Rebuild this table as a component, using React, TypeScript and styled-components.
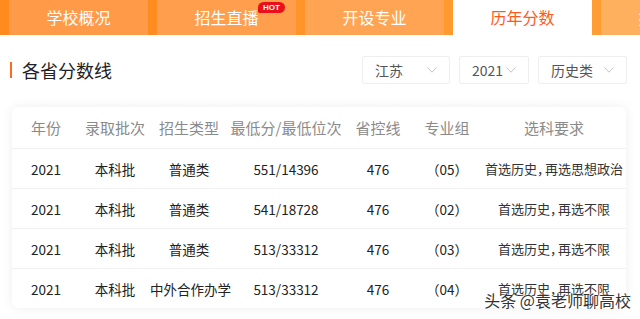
import React from 'react';
import styled, { createGlobalStyle } from 'styled-components';

const GlobalStyle = createGlobalStyle`
  html, body {
    margin: 0;
    padding: 0;
    background: #fff;
    font-family: "Noto Sans CJK SC", "Noto Sans", sans-serif;
  }
`;

const tabs = [
  { label: '学校概况', body: '#ff9a48', edge: '#ff8a1e' },
  { label: '招生直播', body: '#ff9e4c', edge: '#ff8c20', hot: true },
  { label: '开设专业', body: '#ffa452', edge: '#ff9428' },
  { label: '历年分数', body: '#ffffff', edge: '#ff9a2e', active: true },
  { label: '报考指南', body: '#ffb05e', edge: '#ff9c32' },
];

const columns = [
  { title: '年份', width: 68 },
  { title: '录取批次', width: 70 },
  { title: '招生类型', width: 78 },
  { title: '最低分/最低位次', width: 116 },
  { title: '省控线', width: 68 },
  { title: '专业组', width: 70 },
  { title: '选科要求', width: 144 },
];

const rows = [
  ['2021', '本科批', '普通类', '551/14396', '476', '（05）', ['首选历史', '再选思想政治']],
  ['2021', '本科批', '普通类', '541/18728', '476', '（02）', ['首选历史', '再选不限']],
  ['2021', '本科批', '普通类', '513/33312', '476', '（03）', ['首选历史', '再选不限']],
  ['2021', '本科批', '中外合作办学', '513/33312', '476', '（04）', ['首选历史', '再选不限']],
] as const;

const filters = [
  { value: '江苏', width: 88 },
  { value: '2021', width: 70 },
  { value: '历史类', width: 89 },
];

const Chevron = () => (
  <svg width="10" height="6" viewBox="0 0 10 6" fill="none">
    <path d="M0.5 0.5 L5 5.2 L9.5 0.5" stroke="#c4c4c4" strokeWidth="1" />
  </svg>
);

const App: React.FC = () => (
  <Page>
    <GlobalStyle />
    <TabBar>
      {tabs.map((t) => (
        <Tab key={t.label} edge={t.edge}>
          <TabBody body={t.body} active={!!t.active}>
            {t.label}
            {t.hot && <Hot>HOT</Hot>}
          </TabBody>
        </Tab>
      ))}
    </TabBar>

    <Heading>
      <Title>各省分数线</Title>
      <Filters>
        {filters.map((f) => (
          <Select key={f.value} style={{ width: f.width }}>
            <span>{f.value}</span>
            <Chevron />
          </Select>
        ))}
      </Filters>
    </Heading>

    <Card>
      <Row header>
        {columns.map((c) => (
          <HeadCell key={c.title} style={{ width: c.width }}>
            {c.title}
          </HeadCell>
        ))}
      </Row>
      {rows.map((r, i) => (
        <Row key={i}>
          {r.slice(0, 6).map((v, j) => (
            <Cell key={j} style={{ width: columns[j].width }}>
              {v as string}
            </Cell>
          ))}
          <Requirement style={{ width: columns[6].width }}>
            {r[6][0]}
            <Comma>，</Comma>
            {r[6][1]}
          </Requirement>
        </Row>
      ))}
    </Card>

    <Watermark>头条 @袁老师聊高校</Watermark>
  </Page>
);

export default App;

const Page = styled.div`
  position: relative;
  width: 640px;
  height: 319px;
  overflow: hidden;
  background: #fff;
`;

const TabBar = styled.div`
  display: flex;
  height: 35px;
`;

const Tab = styled.div<{ edge: string }>`
  flex: 0 0 148px;
  display: flex;
  border-left: 9px solid ${(p) => p.edge};
  box-sizing: border-box;
`;

const TabBody = styled.div<{ body: string; active: boolean }>`
  position: relative;
  flex: 1;
  display: flex;
  align-items: center;
  justify-content: center;
  padding-bottom: 1px;
  background: ${(p) => p.body};
  color: ${(p) => (p.active ? '#ff5a1e' : '#fff')};
  font-size: 16px;
`;

const Hot = styled.span`
  position: absolute;
  top: 2px;
  left: 101px;
  height: 11px;
  padding: 0 5px;
  border-radius: 6px 6px 6px 2px;
  background: #ea0f1a;
  color: #fff;
  font-family: "Liberation Sans", Arial, sans-serif;
  font-size: 8px;
  font-weight: 700;
  line-height: 11px;
`;

const Heading = styled.div`
  display: flex;
  align-items: center;
  justify-content: space-between;
  padding: 21px 13px 0 10px;
  height: 28px;
`;

const Title = styled.h2`
  margin: 0;
  padding-left: 10px;
  border-left: 2px solid #ff6a1e;
  height: 16px;
  display: flex;
  align-items: center;
  font-size: 18px;
  font-weight: 400;
  color: #222;
`;

const Filters = styled.div`
  display: flex;
  gap: 9px;
`;

const Select = styled.div`
  box-sizing: border-box;
  height: 28px;
  display: flex;
  align-items: center;
  justify-content: space-between;
  padding: 0 12px;
  border: 1px solid #eeeeee;
  border-radius: 2px;
  font-size: 14px;
  color: #555;
`;

const Card = styled.div`
  margin: 23px 14px 0 12px;
  background: #fff;
  border-radius: 6px;
  box-shadow: 0 0 12px rgba(0, 0, 0, 0.07);
`;

const Row = styled.div<{ header?: boolean }>`
  display: flex;
  align-items: center;
  height: ${(p) => (p.header ? 41 : 40)}px;
  border-top: ${(p) => (p.header ? 'none' : '1px solid #f1f1f1')};
  box-sizing: border-box;
`;

const HeadCell = styled.div`
  text-align: center;
  white-space: nowrap;
  font-size: 15px;
  color: #8a8a8a;
`;

const Cell = styled.div`
  text-align: center;
  white-space: nowrap;
  font-size: 13.5px;
  color: #222;
`;

const Requirement = styled(Cell)`
  font-size: 13px;
  color: #333;
`;

// narrow full-width comma, as in the original page
const Comma = styled.span`
  margin-right: -0.4em;
`;

const Watermark = styled.div`
  position: absolute;
  right: 9px;
  bottom: 7px;
  font-size: 16px;
  color: #333;
  text-shadow: 0 0 2px #fff, 0 0 2px #fff, 0 0 1px #fff;
`;
